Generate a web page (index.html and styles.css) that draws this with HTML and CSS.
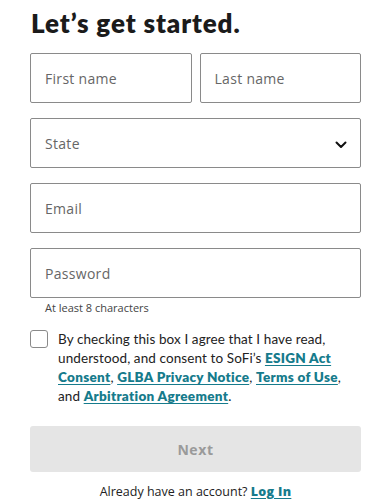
FILE: index.html
```html
<!DOCTYPE html>
<html lang="en">
<head>
<meta charset="utf-8">
<link rel="stylesheet" href="styles.css">
</head>
<body>
<main class="page">
  <h1 class="title">Let’s get started.</h1>
  <form class="form">
    <div class="row">
      <div class="field"><span class="ph">First name</span></div>
      <div class="field"><span class="ph">Last name</span></div>
    </div>
    <div class="field select">
      <span class="ph">State</span>
      <svg class="chev" width="12" height="8" viewBox="0 0 12 8"><path d="M1.5 1.5 L6 6 L10.5 1.5" fill="none" stroke="#111" stroke-width="2" stroke-linecap="round" stroke-linejoin="round"/></svg>
    </div>
    <div class="field"><span class="ph">Email</span></div>
    <div class="pw">
      <div class="field"><span class="ph">Password</span></div>
      <div class="hint">At least 8 characters</div>
    </div>
    <div class="consent">
      <span class="box"></span>
      <p class="terms">By checking this box I agree that I have read, understood, and consent to SoFi’s <a href="#">ESIGN Act Consent</a>, <a href="#">GLBA Privacy Notice</a>, <a href="#">Terms of Use</a>, and <a href="#">Arbitration Agreement</a>.</p>
    </div>
    <div class="next">Next</div>
    <p class="login">Already have an account? <a href="#">Log In</a></p>
  </form>
</main>
</body>
</html>
```
FILE: styles.css
```css
* { box-sizing: border-box; }
html, body { margin: 0; padding: 0; background: #fff; }
body { font-family: "Open Sans", sans-serif; color: #1a1a1a; }
.page { width: 331px; margin-left: 30px; }
.title {
  font-family: "Lato", sans-serif;
  font-weight: 800;
  font-size: 26px;
  line-height: 30px;
  margin: 8px 0 15px 1px;
  color: #1b1b1b;
  letter-spacing: 0.9px;
}
.form { display: flex; flex-direction: column; gap: 15px; }
.row { display: flex; gap: 8px; }
.row .field { flex: 1; }
.field {
  height: 50px;
  border: 1px solid #8a8a8a;
  border-radius: 2px;
  display: flex;
  align-items: center;
  padding: 0 14px;
  justify-content: space-between;
}
.ph { font-size: 14px; color: #666; letter-spacing: 0.3px; }
.chev { margin-right: -1px; margin-top: 3px; }
.pw { display: flex; flex-direction: column; }
.hint { font-size: 11px; color: #444; margin: 3px 0 0 15px; line-height: 14px; }
.consent { display: flex; gap: 10px; margin-top: 0; }
.box {
  flex: none;
  width: 18px; height: 18px;
  border: 1px solid #8a8a8a;
  border-radius: 3px;
  margin-top: 0;
}
.terms {
  margin: 0;
  font-family: "Lato", sans-serif;
  font-size: 13.5px;
  line-height: 19px;
  color: #222;
  letter-spacing: 0.1px;
}
.terms a, .login a { color: #167b8c; font-weight: 800; text-decoration: underline; text-underline-offset: 2px; letter-spacing: 0.3px; }
.next {
  margin-top: 5px;
  height: 46px;
  background: #e5e5e5;
  border-radius: 3px;
  display: flex; align-items: center; justify-content: center;
  color: #9a9a9a;
  font-weight: 700;
  font-size: 14px;
  letter-spacing: 0.6px;
}
.login {
  margin: -3px 0 0;
  text-align: center;
  font-size: 12.5px;
  line-height: 16px;
  color: #222;
}
```
